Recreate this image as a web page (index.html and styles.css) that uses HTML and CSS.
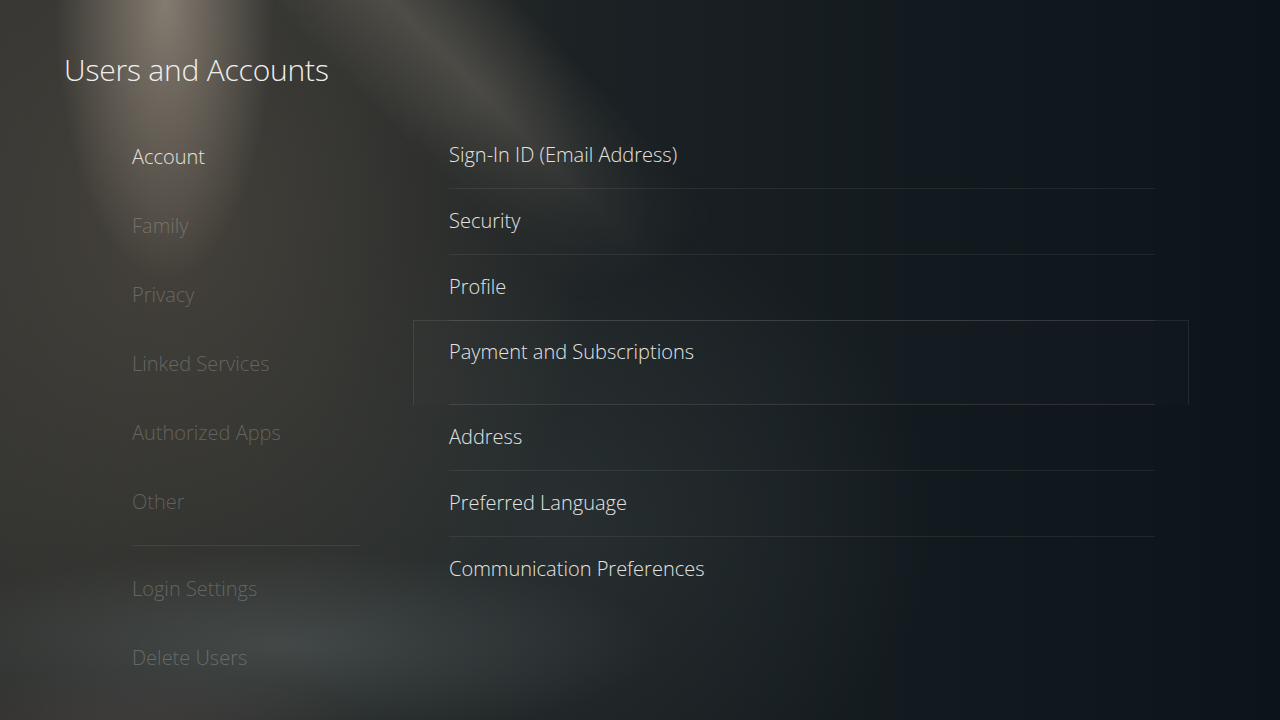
FILE: index.html
```html
<!DOCTYPE html>
<html lang="en">
<head>
<meta charset="utf-8">
<title>Users and Accounts</title>
<link rel="stylesheet" href="styles.css">
</head>
<body>
<main class="screen">
  <h1 class="title">Users and Accounts</h1>
  <div class="content">
    <nav class="side">
      <ul class="side-list">
        <li class="side-item is-active">Account</li>
        <li class="side-item">Family</li>
        <li class="side-item">Privacy</li>
        <li class="side-item">Linked Services</li>
        <li class="side-item">Authorized Apps</li>
        <li class="side-item">Other</li>
      </ul>
      <div class="side-sep"></div>
      <ul class="side-list">
        <li class="side-item">Login Settings</li>
        <li class="side-item">Delete Users</li>
      </ul>
    </nav>
    <ul class="list">
      <li class="row"><div class="row-inner">Sign-In ID (Email Address)</div></li>
      <li class="row"><div class="row-inner">Security</div></li>
      <li class="row"><div class="row-inner">Profile</div></li>
      <li class="row is-focused"><div class="row-inner">Payment and Subscriptions</div></li>
      <li class="row"><div class="row-inner">Address</div></li>
      <li class="row"><div class="row-inner">Preferred Language</div></li>
      <li class="row row-last"><div class="row-inner">Communication Preferences</div></li>
    </ul>
  </div>
</main>
</body>
</html>
```
FILE: styles.css
```css
* { box-sizing: border-box; }
html, body { margin: 0; padding: 0; }
body {
  width: 1280px;
  height: 720px;
  overflow: hidden;
  font-family: "Open Sans", "Noto Sans", sans-serif;
  font-weight: 300;
  color: #e6e6e4;
  background: #111a1f;
}
.screen {
  position: relative;
  width: 1280px;
  height: 720px;
  overflow: hidden;
  padding: 50px 0 0 64px;
  background:
    radial-gradient(ellipse 110px 280px at 165px 0px, rgba(165,152,138,0.7), rgba(165,152,138,0) 100%),
    radial-gradient(ellipse 380px 95px at 280px 645px, rgba(95,104,104,0.45), rgba(95,104,104,0) 100%),
    radial-gradient(ellipse 260px 60px at 120px 730px, rgba(80,68,68,0.55), rgba(80,68,68,0) 100%),
    radial-gradient(ellipse 420px 520px at 170px 220px, rgba(78,72,64,0.75), rgba(78,72,64,0) 100%),
    radial-gradient(ellipse 380px 300px at 560px 520px, rgba(52,60,60,0.5), rgba(52,60,60,0) 100%),
    linear-gradient(to right, #2e302e 0%, #262a29 25%, #1a2023 50%, #131a1f 72%, #0c131a 100%);
}
.screen::before {
  content: "";
  position: absolute;
  left: 0; top: 0; width: 1280px; height: 720px;
  background: linear-gradient(45deg, rgba(150,140,125,0) 45%, rgba(150,140,125,0.32) 50%, rgba(150,140,125,0) 55%);
  background-size: 1280px 1280px;
  background-position: -130px -520px;
  -webkit-mask-image: radial-gradient(ellipse 380px 300px at 420px 40px, #000 25%, transparent 100%);
  mask-image: radial-gradient(ellipse 380px 300px at 420px 40px, #000 25%, transparent 100%);
  pointer-events: none;
}
.title {
  position: relative;
  margin: 0;
  font-size: 30px;
  line-height: 40px;
  font-weight: 300;
  color: #f0efed;
  letter-spacing: -0.2px;
}
.content {
  position: relative;
  display: flex;
  margin-top: 32px;
  padding-left: 68px;
}
.side {
  width: 281px;
  flex: none;
}
.side-list {
  list-style: none;
  margin: 0;
  padding: 0;
}
.side-item {
  height: 69px;
  display: flex;
  align-items: center;
  font-size: 20px;
  color: rgba(255,255,255,0.22);
}
.side-item.is-active {
  color: #e4e2df;
}
.side-sep {
  width: 228px;
  height: 17px;
  border-top: 1px solid rgba(255,255,255,0.07);
  margin-top: 9px;
  margin-bottom: -8px;
}
.list {
  list-style: none;
  margin: 1px 0 0;
  padding: 0;
  width: 776px;
}
.row {
  height: 66px;
}
.row-inner {
  height: 66px;
  margin: 0 34px 0 36px;
  padding-top: 19px;
  font-size: 20px;
  line-height: 26px;
  color: #e3e3e1;
  border-bottom: 1px solid rgba(255,255,255,0.07);
}
.row-last .row-inner { border-bottom: none; }
.row.is-focused {
  height: 85px;
  margin-top: -1px;
  border: 1px solid rgba(255,255,255,0.08);
  border-bottom: none;
  background: rgba(255,255,255,0.012);
}
.row.is-focused .row-inner {
  height: 84px;
  margin-left: 35px;
  margin-right: 33px;
  padding-top: 18px;
  border-bottom: 1px solid rgba(255,255,255,0.1);
}
```
